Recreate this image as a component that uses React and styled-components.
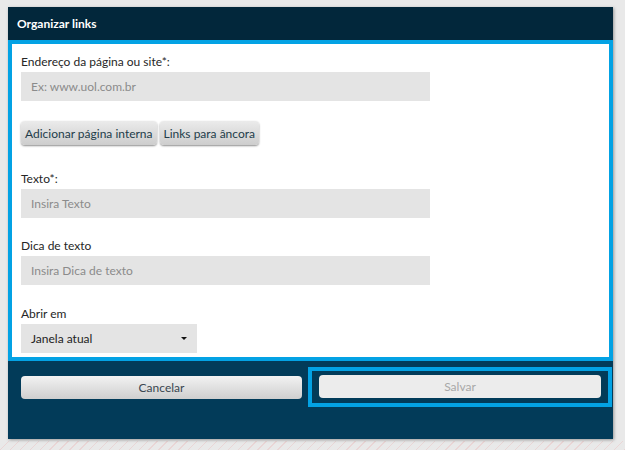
import React from "react";
import styled, { createGlobalStyle } from "styled-components";

const GlobalStyle = createGlobalStyle`
  html, body {
    margin: 0;
    padding: 0;
    height: 100%;
  }
  body {
    background: #e9e9e9;
    font-family: Lato, "Open Sans", sans-serif;
  }
`;

const Page = styled.div`
  width: 625px;
  height: 450px;
  padding: 7px 12px 0 8px;
  box-sizing: border-box;
  overflow: hidden;
  background:
    repeating-linear-gradient(135deg, transparent 0 6px, rgba(235, 170, 170, 0.3) 6px 7px) 0 441px / 100% 9px no-repeat,
    #e9e9e9;
`;

const Modal = styled.div`
  width: 605px;
  height: 432px;
  display: flex;
  flex-direction: column;
  background: #023b59;
  box-shadow: 1px 1px 3px rgba(0, 0, 0, 0.35);
`;

const Header = styled.div`
  height: 33px;
  flex: none;
  display: flex;
  align-items: center;
  padding-left: 9px;
  background: #02273b;
  color: #fff;
  font-size: 12px;
  font-weight: 700;
`;

const Body = styled.div`
  flex: none;
  box-sizing: border-box;
  height: 321px;
  border: 4px solid #03a2e4;
  background: #fff;
  padding: 10px 9px 0;
  display: flex;
  flex-direction: column;
  align-items: flex-start;
`;

const Field = styled.div`
  display: flex;
  flex-direction: column;
  margin-top: ${(p) => p.$top || 0}px;
`;

const Label = styled.label`
  font-size: 12px;
  line-height: 16px;
  color: #262626;
  margin-bottom: 2px;
`;

const Input = styled.div`
  width: ${(p) => p.$width}px;
  height: 29px;
  box-sizing: border-box;
  padding: 0 10px;
  display: flex;
  align-items: center;
  justify-content: space-between;
  background: #e4e4e4;
  color: ${(p) => (p.$value ? "#232323" : "#8b8b8b")};
  font-size: 12px;
`;

const Caret = styled.span`
  width: 0;
  height: 0;
  border-left: 3px solid transparent;
  border-right: 3px solid transparent;
  border-top: 3px solid #111;
`;

const ButtonRow = styled.div`
  display: flex;
  gap: 3px;
  margin-top: 20px;
`;

const SmallButton = styled.button`
  height: 24px;
  padding: 0 4px;
  border: none;
  border-radius: 4px;
  background: linear-gradient(#ebebeb, #cdcdcd);
  box-shadow: 0 1px 2px rgba(0, 0, 0, 0.45);
  color: #233c4a;
  font-family: inherit;
  font-size: 12px;
  cursor: pointer;
`;

const Footer = styled.div`
  display: flex;
  align-items: flex-start;
  padding: 0 1px 0 13px;
  gap: 6px;
`;

const ActionButton = styled.button`
  width: ${(p) => (p.$full ? "100%" : "281px")};
  height: 23px;
  border: none;
  border-radius: 4px;
  background: ${(p) => (p.$disabled ? "#ececec" : "linear-gradient(#f2f2f2, #cfcfcf)")};
  color: ${(p) => (p.$disabled ? "#a8a8a8" : "#3a4650")};
  font-family: inherit;
  font-size: 12px;
  margin-top: ${(p) => (p.$full ? 0 : 15)}px;
`;

const FocusRing = styled.div`
  flex: 1;
  margin-top: 6px;
  border: 4px solid #03a2e4;
  padding: 4px 7px 5px;
`;

export default function App() {
  return (
    <>
      <GlobalStyle />
      <Page>
        <Modal>
          <Header>Organizar links</Header>
          <Body>
            <Field>
              <Label>Endereço da página ou site*:</Label>
              <Input $width={409}>Ex: www.uol.com.br</Input>
            </Field>
            <ButtonRow>
              <SmallButton>Adicionar página interna</SmallButton>
              <SmallButton>Links para âncora</SmallButton>
            </ButtonRow>
            <Field $top={26}>
              <Label>Texto*:</Label>
              <Input $width={409}>Insira Texto</Input>
            </Field>
            <Field $top={20}>
              <Label>Dica de texto</Label>
              <Input $width={409}>Insira Dica de texto</Input>
            </Field>
            <Field $top={21}>
              <Label>Abrir em</Label>
              <Input $width={176} $value>
                Janela atual
                <Caret />
              </Input>
            </Field>
          </Body>
          <Footer>
            <ActionButton>Cancelar</ActionButton>
            <FocusRing>
              <ActionButton $full $disabled>
                Salvar
              </ActionButton>
            </FocusRing>
          </Footer>
        </Modal>
      </Page>
    </>
  );
}
